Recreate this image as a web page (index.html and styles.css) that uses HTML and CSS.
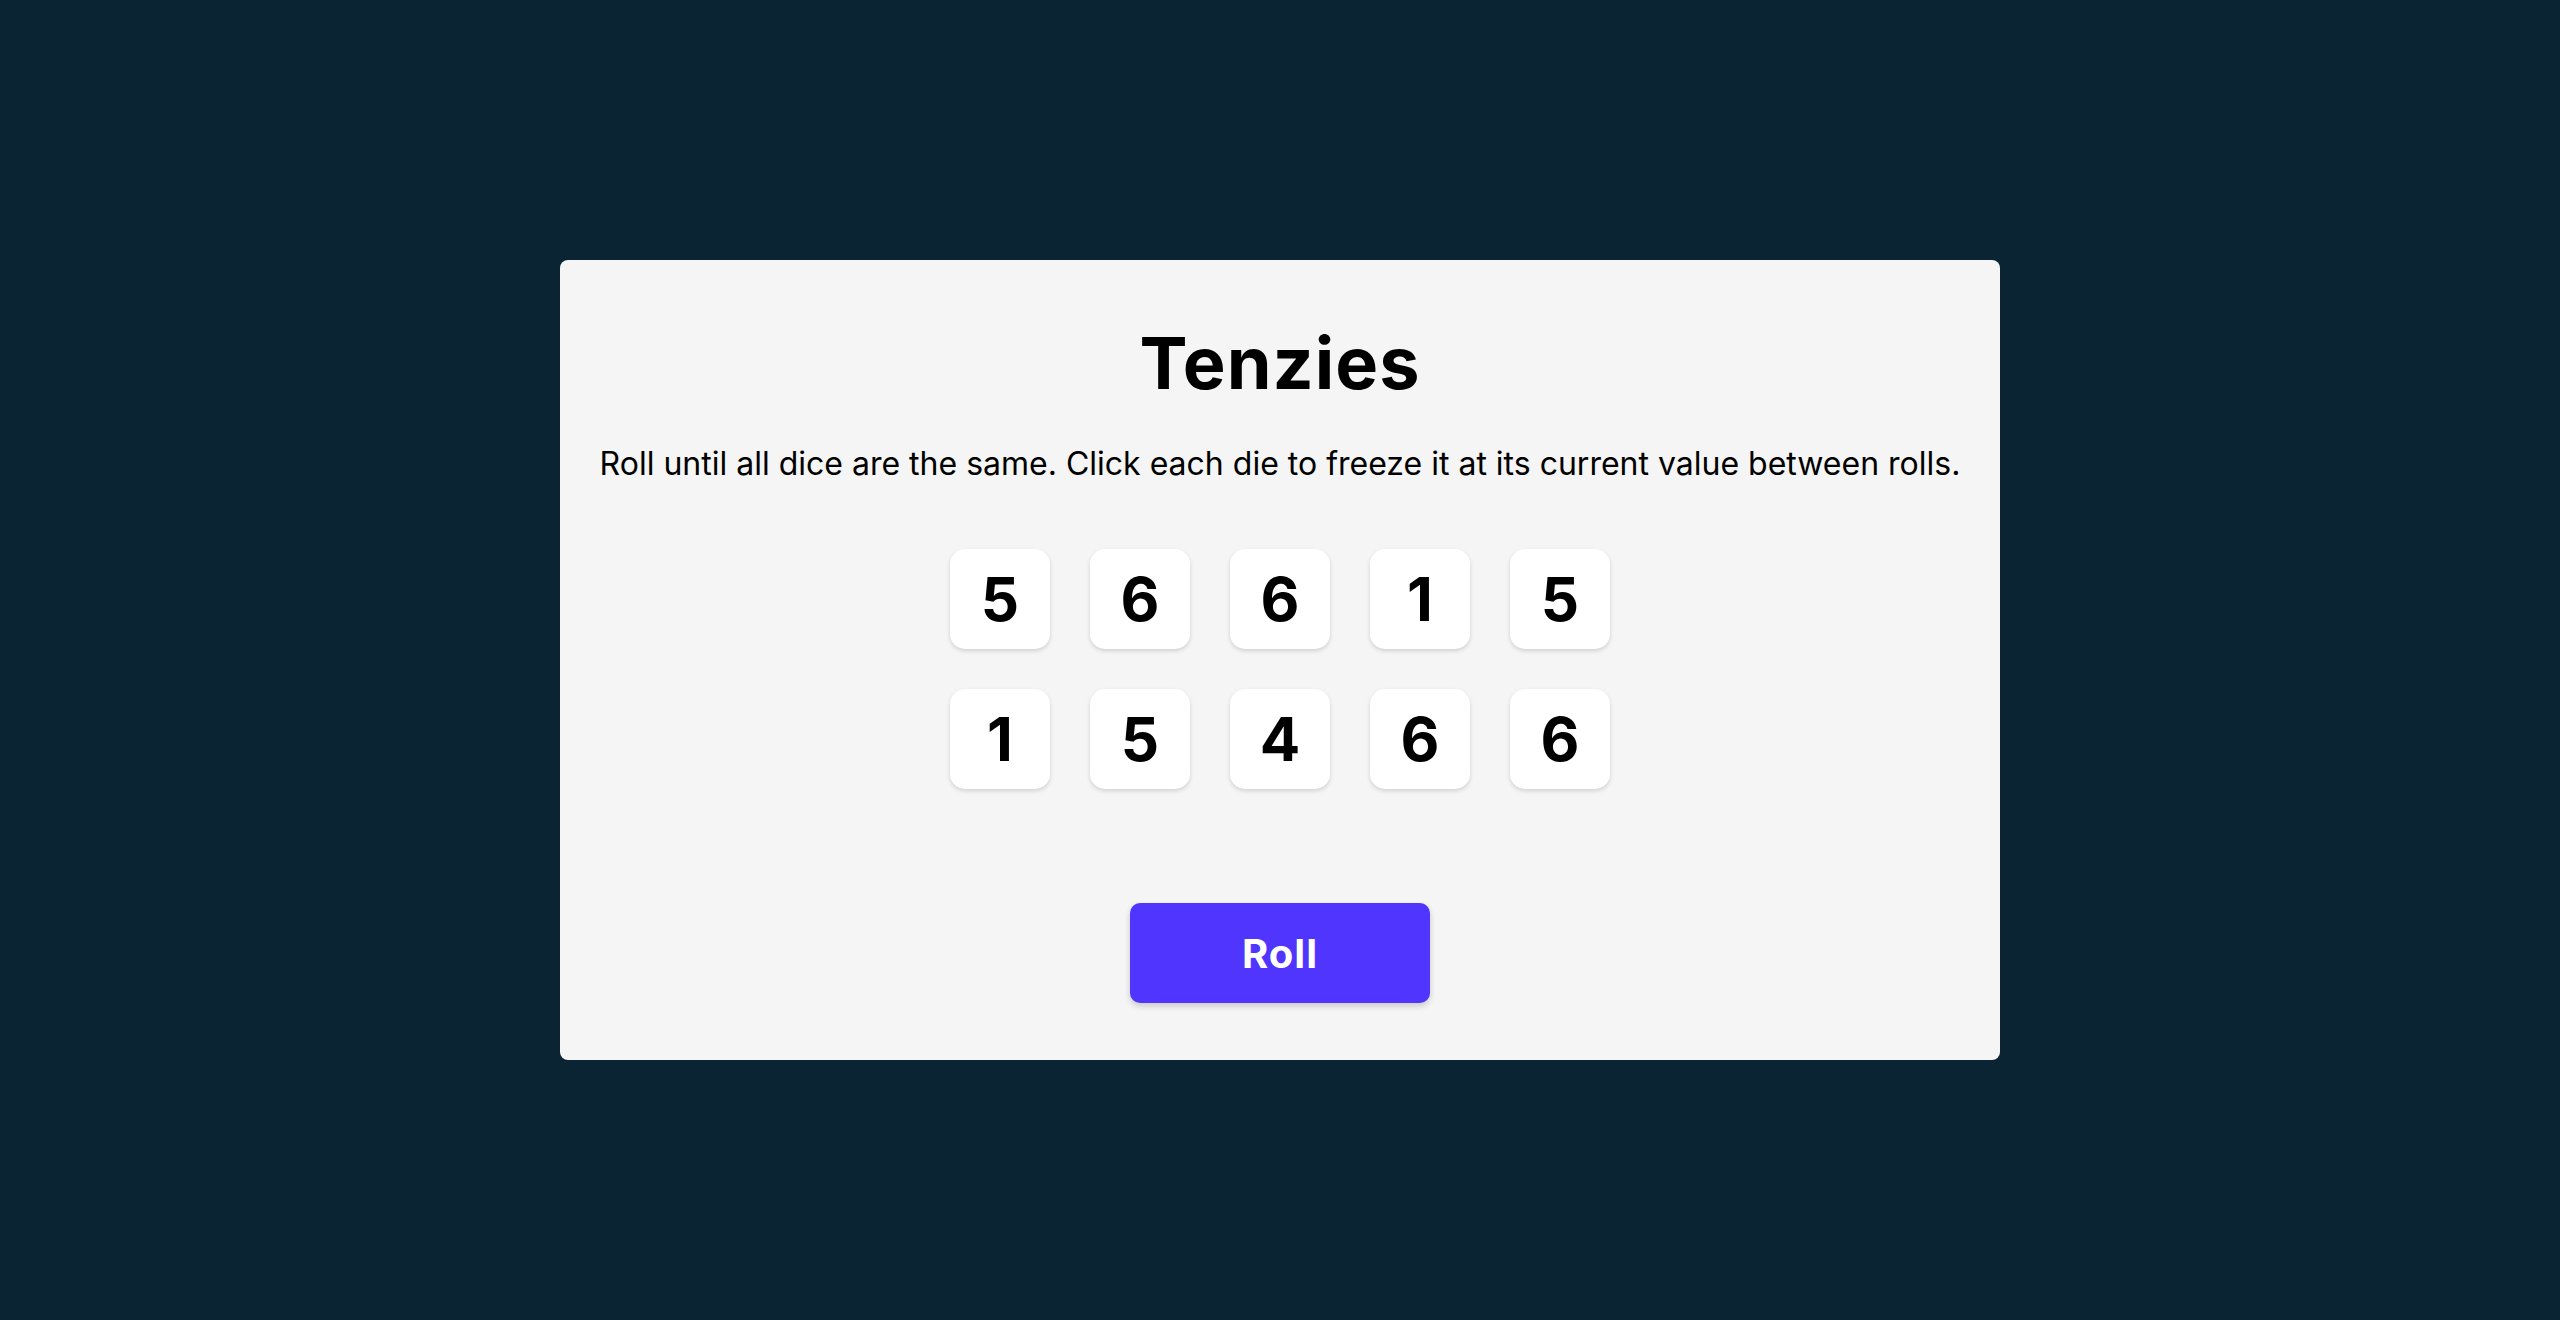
FILE: index.html
```html
<!DOCTYPE html>
<html lang="en">
<head>
<meta charset="utf-8">
<title>Tenzies</title>
<link rel="stylesheet" href="styles.css">
</head>
<body>
<main class="card">
  <h1 class="title">Tenzies</h1>
  <p class="instructions">Roll until all dice are the same. Click each die to freeze it at its current value between rolls.</p>
  <div class="dice">
    <button class="die">5</button>
    <button class="die">6</button>
    <button class="die">6</button>
    <button class="die">1</button>
    <button class="die">5</button>
    <button class="die">1</button>
    <button class="die">5</button>
    <button class="die">4</button>
    <button class="die">6</button>
    <button class="die">6</button>
  </div>
  <button class="roll">Roll</button>
</main>
</body>
</html>
```
FILE: styles.css
```css
* { box-sizing: border-box; }
html, body { height: 100%; }
body {
  margin: 0;
  background: #0B2434;
  font-family: Inter, "Noto Sans", sans-serif;
  display: flex;
  align-items: center;
  justify-content: center;
}
.card {
  width: 1440px;
  height: 800px;
  background: #F5F5F5;
  border-radius: 8px;
  padding: 67px 40px 57px;
  display: flex;
  flex-direction: column;
  align-items: center;
}
.title {
  margin: 0;
  font-size: 72px;
  line-height: 1;
  font-weight: 700;
  letter-spacing: 1px;
  color: #000;
}
.instructions {
  margin: 49px 0 0;
  font-size: 32px;
  line-height: 1;
  font-weight: 400;
  color: #000;
  white-space: nowrap;
}
.dice {
  margin-top: 69px;
  display: grid;
  grid-template-columns: repeat(5, 100px);
  grid-auto-rows: 100px;
  gap: 40px;
}
.die {
  border: none;
  background: #FFFFFF;
  border-radius: 15px;
  box-shadow: 0 2px 4px rgba(0, 0, 0, 0.15);
  font-family: Inter, "Noto Sans", sans-serif;
  font-size: 60px;
  font-weight: 700;
  color: #000;
  padding: 0;
  display: flex;
  align-items: center;
  justify-content: center;
}
.roll {
  margin-top: 114px;
  width: 300px;
  height: 100px;
  border: none;
  border-radius: 10px;
  background: #5035FF;
  color: #FFFFFF;
  font-family: Inter, "Noto Sans", sans-serif;
  font-size: 40px;
  font-weight: 700;
  letter-spacing: 1px;
  box-shadow: 0 3px 6px rgba(0, 0, 0, 0.18);
  padding: 0;
}
```
